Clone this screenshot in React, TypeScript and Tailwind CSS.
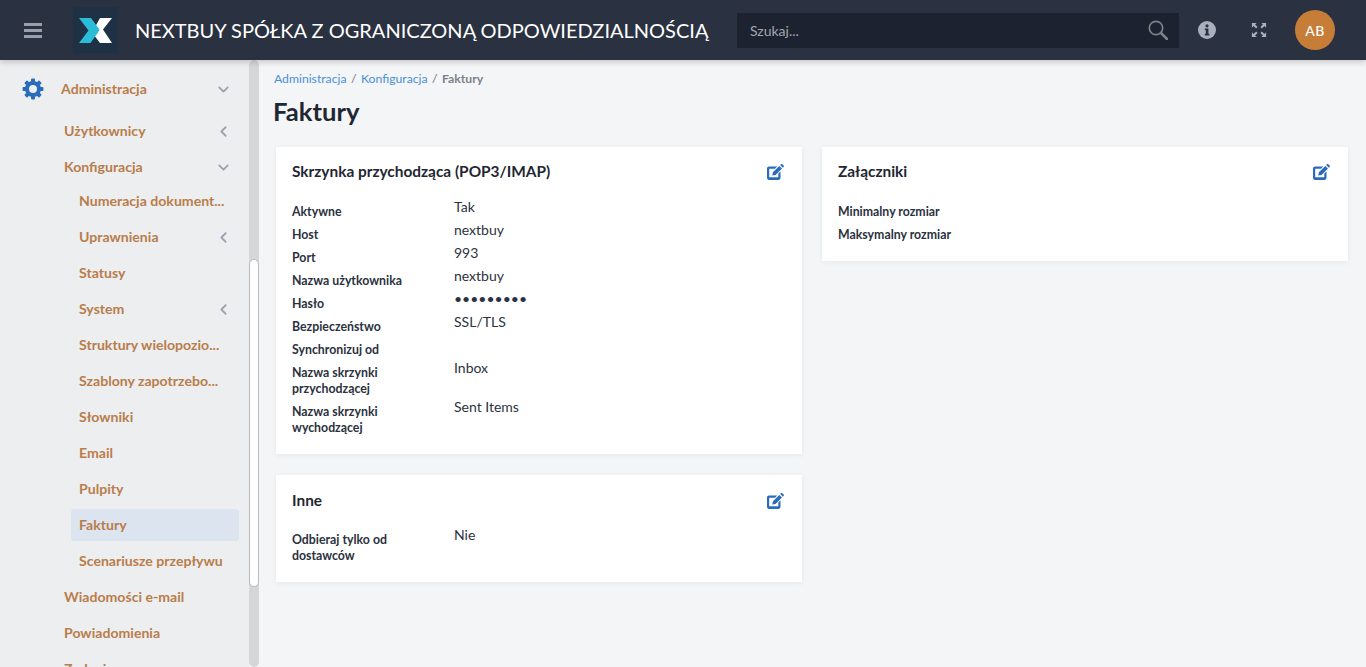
import { ChevronDown, ChevronLeft } from "lucide-react";

const Gear = () => (
  <svg width="22" height="22" viewBox="0 0 22 22" className="shrink-0">
    <circle cx="11" cy="11" r="6" fill="none" stroke="#2a6cbb" strokeWidth="4" />
    {[0, 45, 90, 135, 180, 225, 270, 315].map((a) => (
      <rect key={a} x="9" y="0.6" width="4" height="3.5" rx="0.8" fill="#2a6cbb" transform={`rotate(${a} 11 11)`} />
    ))}
  </svg>
);

const EditIcon = () => (
  <svg width="17" height="16" viewBox="0 0 17 16" className="shrink-0">
    <path fill="#2a6cbb" d="M2 2.5h8.2L8 4.7H2.4a.2.2 0 0 0-.2.2v8.2c0 .1.1.2.2.2h8.7c.1 0 .2-.1.2-.2V9.6l2.2-2.2v6.4c0 1.2-.9 2.1-2 2.1H2c-1.1 0-2-.9-2-2.1V4.6c0-1.2.9-2.1 2-2.1Z" />
    <path fill="#2a6cbb" d="M12.3 1.9 15 4.6 8.6 11l-3.3.6.6-3.3 6.4-6.4ZM13.2 1l.7-.7c.4-.4 1-.4 1.4 0l1.3 1.3c.4.4.4 1 0 1.4l-.7.7L13.2 1Z" />
  </svg>
);

const FullscreenIcon = () => (
  <svg width="16" height="16" viewBox="0 0 18 18" fill="#aab0bd" className="shrink-0">
    <path d="M1 1h5.5L4.6 2.9l2.8 2.8-1.7 1.7-2.8-2.8L1 6.5V1ZM17 1v5.5l-1.9-1.9-2.8 2.8-1.7-1.7 2.8-2.8L11.5 1H17ZM1 17v-5.5l1.9 1.9 2.8-2.8 1.7 1.7-2.8 2.8L6.5 17H1ZM17 17h-5.5l1.9-1.9-2.8-2.8 1.7-1.7 2.8 2.8 1.9-1.9V17Z" />
  </svg>
);

const MenuIcon = () => (
  <svg width="18" height="15" viewBox="0 0 18 15" fill="#9aa0ab" className="shrink-0">
    <rect y="0" width="18" height="3" />
    <rect y="6" width="18" height="3" />
    <rect y="12" width="18" height="3" />
  </svg>
);

const InfoIcon = () => (
  <svg width="18" height="18" viewBox="0 0 18 18" className="shrink-0">
    <circle cx="9" cy="9" r="9" fill="#aab0bd" />
    <circle cx="9" cy="4.8" r="1.6" fill="#2a3140" />
    <path fill="#2a3140" d="M6.8 7.4h3.6v5.4h1v1.6H6.8v-1.6h1V9H6.8V7.4Z" />
  </svg>
);

const SearchIcon = () => (
  <svg width="20" height="20" viewBox="0 0 20 20" fill="none" stroke="#7e8186" className="shrink-0">
    <circle cx="8" cy="8" r="6.7" strokeWidth="1.7" />
    <path d="M13 13l6 6" strokeWidth="2.6" strokeLinecap="round" />
  </svg>
);

const Logo = () => (
  <div className="w-[45px] h-[46px] bg-[#1e3145] flex items-center justify-center shrink-0">
    <svg width="33" height="25" viewBox="0 0 33 25">
      <path fill="#ffffff" d="M21 0h12l-9 11.5L33 25H21l-8-10.5L21 0Z" />
      <path fill="#2bbcd8" d="M0 0h12l8.5 11.5-1.5 3L11.5 25H0l9.5-12.5L0 0Z" />
    </svg>
  </div>
);

type Item = { label: string; level: 1 | 2; arrow?: "down" | "left"; active?: boolean; tight?: boolean };

const items: Item[] = [
  { label: "Użytkownicy", level: 1, arrow: "left" },
  { label: "Konfiguracja", level: 1, arrow: "down", tight: true },
  { label: "Numeracja dokument...", level: 2 },
  { label: "Uprawnienia", level: 2, arrow: "left" },
  { label: "Statusy", level: 2 },
  { label: "System", level: 2, arrow: "left" },
  { label: "Struktury wielopozio...", level: 2 },
  { label: "Szablony zapotrzebo...", level: 2 },
  { label: "Słowniki", level: 2 },
  { label: "Email", level: 2 },
  { label: "Pulpity", level: 2 },
  { label: "Faktury", level: 2, active: true },
  { label: "Scenariusze przepływu", level: 2 },
  { label: "Wiadomości e-mail", level: 1 },
  { label: "Powiadomienia", level: 1 },
  { label: "Zadania", level: 1 },
];

const SideRow = ({ item }: { item: Item }) => (
  <div
    className={`h-8 flex items-center justify-between rounded-sm pl-2 pr-[7px] text-[14.1px] font-bold text-[#b97d4b] ${
      item.level === 1 ? "ml-[56px]" : "ml-[71px]"
    } ${item.tight ? "mb-[2px]" : "mb-1"} ${item.active ? "bg-[#dce4f0]" : ""}`}
  >
    <span className="whitespace-nowrap">{item.label}</span>
    {item.arrow === "left" && <ChevronLeft size={17} strokeWidth={2.5} className="text-[#9ca3af] shrink-0" />}
    {item.arrow === "down" && <ChevronDown size={17} strokeWidth={2.5} className="text-[#9ca3af] shrink-0" />}
  </div>
);

const Sidebar = () => (
  <aside className="w-[249px] shrink-0 overflow-hidden bg-[#edeef0] pt-[11px]">
    <div className="h-9 mb-2 pl-[22px] pr-[17px] flex items-center text-[14.1px] font-bold text-[#b97d4b]">
      <Gear />
      <span className="ml-[17px] flex-1">Administracja</span>
      <ChevronDown size={17} strokeWidth={2.5} className="text-[#9ca3af]" />
    </div>
    <div className="pr-[10px]">
      {items.map((item) => (
        <SideRow key={item.label} item={item} />
      ))}
    </div>
  </aside>
);

const Scrollbar = () => (
  <div className="w-[10px] shrink-0 bg-[#d5d6d8] rounded-md flex flex-col">
    <div className="h-[199px] shrink-0" />
    <div className="h-[328px] shrink-0 bg-white border border-[#b9bbbf] rounded-md" />
  </div>
);

type Row = { label: string; value?: string };

const Field = ({ label, value }: Row) => (
  <div className="flex items-start mb-[7px]">
    <div className="w-[162px] shrink-0 pr-4 text-[12.32px] leading-4 font-bold text-[#2b3240]">{label}</div>
    <div className="-mt-[5px] text-[14px] leading-4 text-[#2b3240]">{value}</div>
  </div>
);

const Card = ({ title, rows, className, headClass }: { title: string; rows: Row[]; className?: string; headClass?: string }) => (
  <div className={`bg-white shadow-[0_1px_6px_rgba(0,0,0,0.06)] px-4 ${className ?? ""}`}>
    <div className={`flex items-center justify-between pr-[2px] h-5 ${headClass ?? ""}`}>
      <h2 className="text-[15.4px] font-bold text-[#1f2733]">{title}</h2>
      <EditIcon />
    </div>
    {rows.map((r) => (
      <Field key={r.label} {...r} />
    ))}
  </div>
);

const mailbox: Row[] = [
  { label: "Aktywne", value: "Tak" },
  { label: "Host", value: "nextbuy" },
  { label: "Port", value: "993" },
  { label: "Nazwa użytkownika", value: "nextbuy" },
  { label: "Hasło", value: "•••••••••" },
  { label: "Bezpieczeństwo", value: "SSL/TLS" },
  { label: "Synchronizuj od" },
  { label: "Nazwa skrzynki przychodzącej", value: "Inbox" },
  { label: "Nazwa skrzynki wychodzącej", value: "Sent Items" },
];

export default function App() {
  return (
    <div className="h-[667px] w-[1366px] overflow-hidden flex flex-col bg-[#f4f5f6] font-['Lato',sans-serif]">
      <header className="h-[60px] shrink-0 bg-[#2a3140] flex items-center shadow-[0_2px_6px_rgba(0,0,0,0.2)] z-10">
        <div className="ml-6"><MenuIcon /></div>
        <div className="ml-[31px]"><Logo /></div>
        <div className="ml-[17px] w-[602px] shrink-0 text-[20px] text-white whitespace-nowrap">
          NEXTBUY SPÓŁKA Z OGRANICZONĄ ODPOWIEDZIALNOŚCIĄ
        </div>
        <div className="w-[442px] h-[35px] shrink-0 bg-[#1c2230] flex items-center justify-between pl-[13px] pr-[11px]">
          <span className="text-[14px] text-[#a2a6ae]">Szukaj...</span>
          <SearchIcon />
        </div>
        <div className="ml-[19px]"><InfoIcon /></div>
        <div className="ml-[35px]"><FullscreenIcon /></div>
        <div className="ml-[28px] w-10 h-10 shrink-0 rounded-full bg-[#c67d37] flex items-center justify-center text-[14px] font-medium text-white tracking-wide">
          AB
        </div>
      </header>
      <div className="flex-1 flex min-h-0">
        <Sidebar />
        <Scrollbar />
        <main className="flex-1 pl-[15px] pr-[18px] pt-[12px]">
          <nav className="text-[12.2px] leading-[13px] flex gap-[4.5px] text-[#4a90d9]">
            <span>Administracja</span>
            <span className="text-[#6b7280]">/</span>
            <span>Konfiguracja</span>
            <span className="text-[#6b7280]">/</span>
            <span className="text-[#7b818c] font-bold">Faktury</span>
          </nav>
          <h1 className="mt-[12px] -ml-px text-[25.6px] leading-[29px] font-bold text-[#1f2733]">Faktury</h1>
          <div className="mt-[21px] ml-[2px] flex gap-[20px] items-start">
            <div className="w-[526px] flex flex-col gap-[21px]">
              <Card title="Skrzynka przychodząca (POP3/IMAP)" rows={mailbox} className="h-[307px] pt-[15px]" headClass="mb-[22px]" />
              <Card title="Inne" rows={[{ label: "Odbieraj tylko od dostawców", value: "Nie" }]} className="h-[107px] pt-4" headClass="mb-[21px]" />
            </div>
            <div className="w-[526px]">
              <Card
                title="Załączniki"
                rows={[{ label: "Minimalny rozmiar" }, { label: "Maksymalny rozmiar" }]}
                className="h-[114px] pt-[15px]"
                headClass="mb-[22px]"
              />
            </div>
          </div>
        </main>
      </div>
    </div>
  );
}
